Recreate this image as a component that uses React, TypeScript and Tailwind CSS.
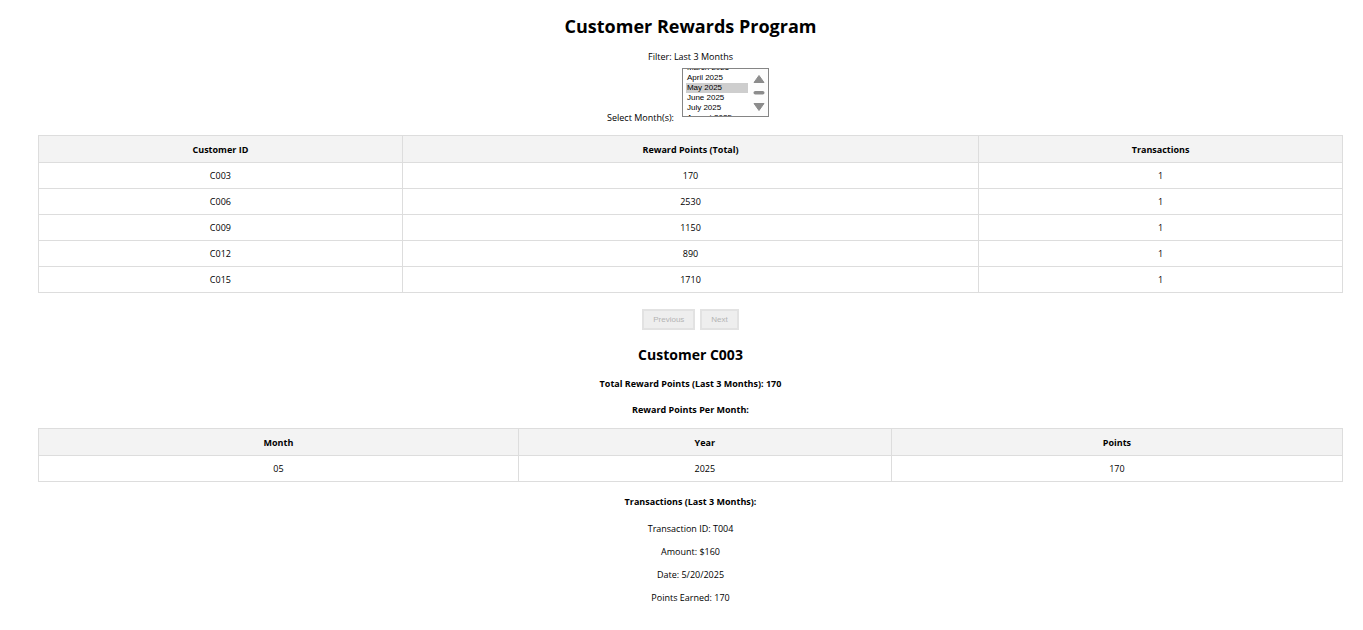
import { useEffect, useRef, useState } from "react";

const months = [
  "January", "February", "March", "April", "May", "June",
  "July", "August", "September", "October", "November", "December",
];

const customers = [
  { id: "C003", points: 170, transactions: 1 },
  { id: "C006", points: 2530, transactions: 1 },
  { id: "C009", points: 1150, transactions: 1 },
  { id: "C012", points: 890, transactions: 1 },
  { id: "C015", points: 1710, transactions: 1 },
];

const cell = "border border-[#dddddd] px-0 pt-[1px] pb-0 text-center";

function DataTable({ heads, widths, rows }: {
  heads: string[];
  widths: string[];
  rows: (string | number)[][];
}) {
  return (
    <table className="w-full table-fixed border-collapse">
      <thead>
        <tr className="bg-[#f3f3f3]">
          {heads.map((h, i) => (
            <th key={h} scope="col" className={`${cell} ${widths[i]} h-[27px] font-bold`}>{h}</th>
          ))}
        </tr>
      </thead>
      <tbody>
        {rows.map((r) => (
          <tr key={r[0]}>
            {r.map((v, i) => (
              <td key={i} className={`${cell} h-[26px]`}>{v}</td>
            ))}
          </tr>
        ))}
      </tbody>
    </table>
  );
}

function MonthSelect() {
  const ref = useRef<HTMLSelectElement>(null);
  const [selected, setSelected] = useState<string[]>(["May"]);

  useEffect(() => {
    if (ref.current) ref.current.scrollTop = 26;
  }, []);

  return (
    <div className="relative mx-[5px] h-[49px] w-[87px]">
      <select
        id="months"
        ref={ref}
        multiple
        value={selected}
        onChange={(e) => setSelected(Array.from(e.target.selectedOptions, (o) => o.value))}
        className="block h-full w-full overflow-y-scroll border border-[#858585] bg-white pr-[20px] pl-[3px] font-['Liberation_Sans',sans-serif] text-[8px] [scrollbar-width:none]"
      >
        {months.map((m) => (
          <option
            key={m}
            value={m}
            className="h-[10px] min-h-0 px-[1px] py-0 leading-[10px] text-black checked:bg-[#cecece] checked:bg-linear-to-r checked:from-[#cecece] checked:to-[#cecece]"
          >
            {m} 2025
          </option>
        ))}
      </select>
      <svg
        className="pointer-events-none absolute top-px right-px"
        width="18"
        height="47"
        viewBox="0 0 18 47"
        fill="#8b8b8b"
        stroke="#8b8b8b"
        strokeLinejoin="round"
        aria-hidden="true"
      >
        <rect width="18" height="47" fill="#fcfcfc" stroke="none" />
        <path d="M9 6.5 L14 13.5 H4 Z" />
        <rect x="3.5" y="22" width="11" height="3.6" rx="1.8" stroke="none" />
        <path d="M4 34.5 H14 L9 41.5 Z" />
      </svg>
    </div>
  );
}

export default function App() {
  const button =
    "h-[21px] border-2 border-[#e2e2e2] bg-[#eeeeee] px-[9px] font-['Liberation_Sans',sans-serif] text-[8px] text-[#b4b4b4]";
  return (
    <main className="bg-white pt-[12px] pr-[20px] pb-[20px] pl-[38px] text-center font-['Open_Sans','Noto_Sans',sans-serif] text-[9px] leading-[14px] text-black">
      <h1 className="text-[18px] leading-[28px] font-bold">Customer Rewards Program</h1>
      <p className="mt-[10px]">Filter: Last 3 Months</p>
      <div className="mt-[4px] flex items-end justify-center">
        <label htmlFor="months" className="mr-[3px] -mb-[8px]">Select Month(s):</label>
        <MonthSelect />
      </div>

      <div className="mt-[18px]">
        <DataTable
          heads={["Customer ID", "Reward Points (Total)", "Transactions"]}
          widths={["w-[27.9%]", "w-[44.2%]", "w-[27.9%]"]}
          rows={customers.map((c) => [c.id, c.points, c.transactions])}
        />
      </div>

      <div className="mt-[16px] flex justify-center gap-[5px]">
        <button type="button" disabled className={button}>Previous</button>
        <button type="button" disabled className={button}>Next</button>
      </div>

      <section>
        <h2 className="mt-[15px] text-[14px] leading-[20px] font-bold">Customer C003</h2>
        <h3 className="mt-[12px] font-bold">Total Reward Points (Last 3 Months): 170</h3>
        <h3 className="mt-[12px] font-bold">Reward Points Per Month:</h3>
        <div className="mt-[11px]">
          <DataTable
            heads={["Month", "Year", "Points"]}
            widths={["w-[36.8%]", "w-[28.6%]", "w-[34.6%]"]}
            rows={[["05", 2025, 170]]}
          />
        </div>
        <h3 className="mt-[13px] font-bold">Transactions (Last 3 Months):</h3>
        <div className="mt-[13px] flex flex-col gap-[9px]">
          <p>Transaction ID: T004</p>
          <p>Amount: $160</p>
          <p>Date: 5/20/2025</p>
          <p>Points Earned: 170</p>
        </div>
      </section>
    </main>
  );
}
